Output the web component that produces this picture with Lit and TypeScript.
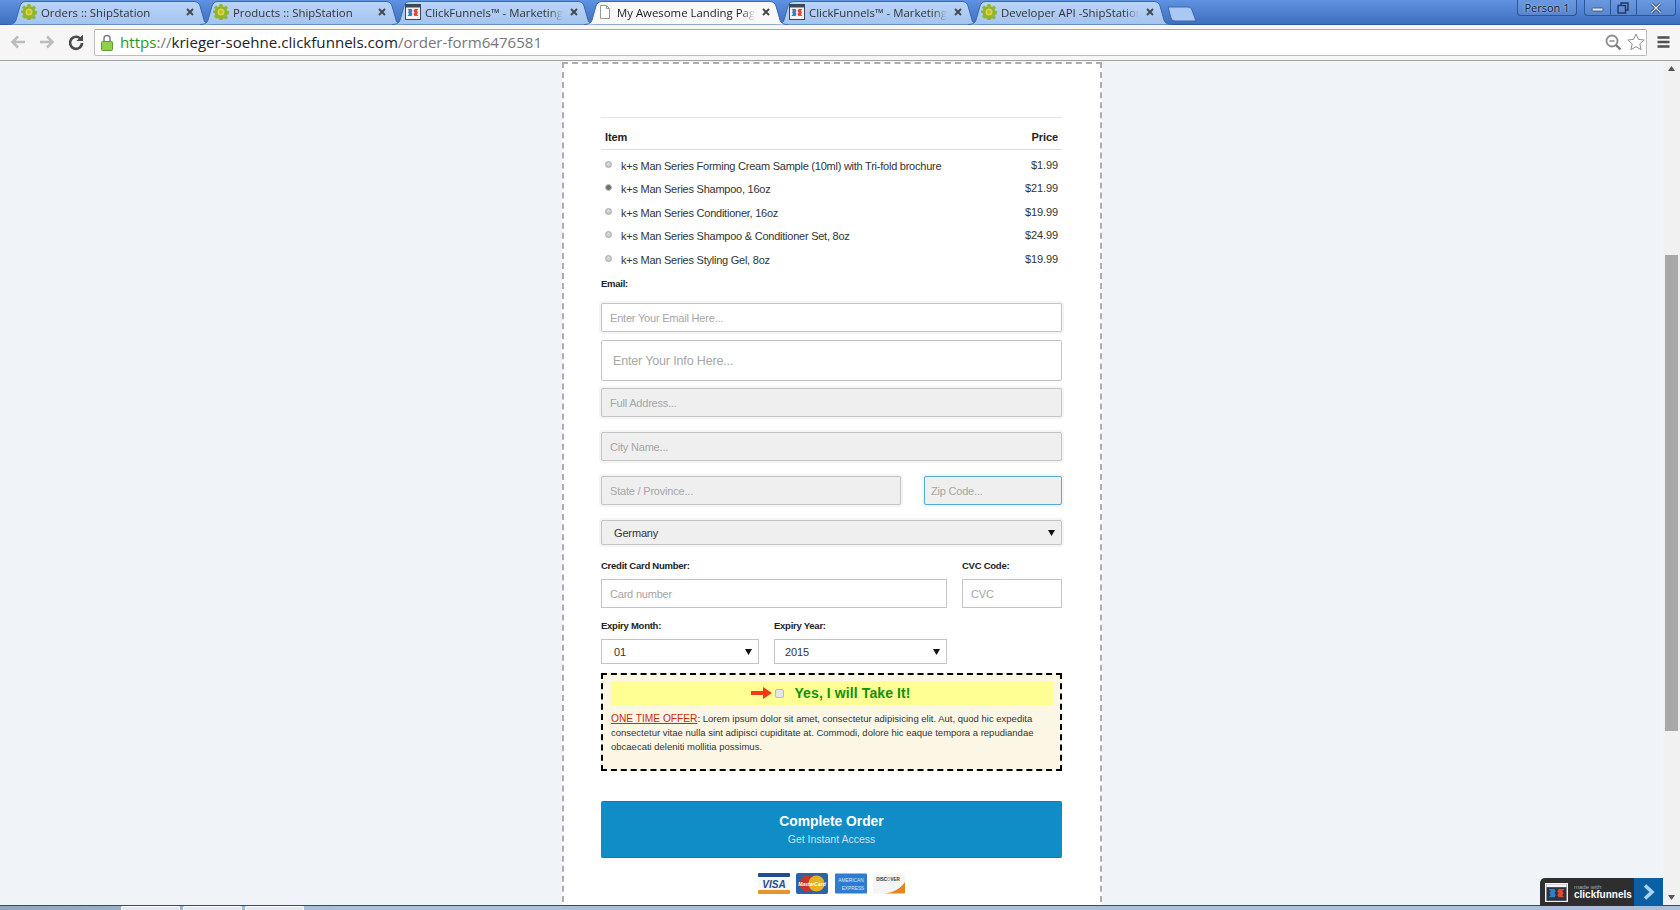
import { LitElement, css, html, svg } from "lit";
import { customElement } from "lit/decorators.js";

const gear = html`<svg class="fav" viewBox="0 0 16 16">
  <path fill="#8fb52c" d="M6.600 0h2.800l.4 2.300 1.300.6L13 1.600l2 2-1.300 1.900.6 1.300 2.300.4v2.800l-2.300.4-.6 1.300 1.300 1.900-2 2-1.900-1.300-1.300.6-.4 2.300H6.600l-.4-2.300-1.300-.6L3 14.400l-2-2 1.300-1.900-.6-1.300L-.6 8.800V6.900l2.300-.4.600-1.300L1 3.600l2-2 1.900 1.300 1.300-.6z"/>
  <circle cx="8" cy="8" r="3.500" fill="#e3d23a"/>
  <circle cx="8" cy="8" r="1.800" fill="#a7c23b"/>
</svg>`;

const funnelMark = (bg: string, frame: string) => svg`
  <rect x=".5" y=".5" width="15" height="15" fill=${bg} stroke=${frame}/>
  <rect x="1" y="1" width="14" height="2.500" fill=${frame}/>
  <path fill="#2f7fc9" d="M2.500 5h4l1 2-1 1.500 1 1.500-1 2h-4l1.500-2-1-1.500 1-1.500z"/>
  <path fill="#e2492f" d="M13.500 5h-4l-1 2 1 1.500-1 1.500 1 2h4L12 10.500l1-2L12 7z"/>`;

const funnel = html`<svg class="fav" viewBox="0 0 16 16">${funnelMark("#f4f4f4", "#3a4a5c")}</svg>`;

const doc = html`<svg class="fav" viewBox="0 0 16 16">
  <path fill="#fff" stroke="#9a9a9a" d="M3.500 1.500h6l3 3v10h-9z"/>
  <path fill="none" stroke="#9a9a9a" d="M9.500 1.500v3h3"/>
</svg>`;

const tabs = [
  { title: "Orders :: ShipStation", icon: gear },
  { title: "Products :: ShipStation", icon: gear },
  { title: "ClickFunnels™ - Marketing Software", icon: funnel },
  { title: "My Awesome Landing Page", icon: doc, active: true },
  { title: "ClickFunnels™ - Marketing Software", icon: funnel },
  { title: "Developer API -ShipStation Help", icon: gear },
];

const products = [
  { name: "k+s Man Series Forming Cream Sample (10ml) with Tri-fold brochure", price: "$1.99" },
  { name: "k+s Man Series Shampoo, 16oz", price: "$21.99", checked: true },
  { name: "k+s Man Series Conditioner, 16oz", price: "$19.99" },
  { name: "k+s Man Series Shampoo & Conditioner Set, 8oz", price: "$24.99" },
  { name: "k+s Man Series Styling Gel, 8oz", price: "$19.99" },
];

@customElement("app-root")
export class AppRoot extends LitElement {
  static styles = css`
    :host {
      display: flex;
      flex-direction: column;
      position: relative;
      width: 1680px;
      height: 910px;
      overflow: hidden;
      font-family: "Liberation Sans", Arial, sans-serif;
      background: #f0f3f8;
    }
    input, button { font-family: inherit; }

    /* browser chrome */
    .tabbar {
      height: 25px;
      flex: none;
      display: flex;
      padding-left: 8px;
      box-sizing: border-box;
      background: linear-gradient(#5f92e0, #3f70c0);
      border-bottom: 1px solid #2f5a9e;
      position: relative;
    }
    .tab {
      width: 192px;
      flex: none;
      height: 24px;
      position: relative;
      display: flex;
      align-items: center;
      padding-left: 13px;
      box-sizing: border-box;
      font-family: "Open Sans", sans-serif;
      font-size: 11.400px;
      color: #333;
    }
    .tab.active { z-index: 1; color: #222; }
    .tab-shape {
      position: absolute;
      left: 0;
      top: 0;
      width: 204px;
      height: 25px;
    }
    .fav { width: 16px; height: 16px; flex: none; position: relative; }
    .tab-title {
      position: relative;
      margin-left: 4px;
      width: 138px;
      white-space: nowrap;
      overflow: hidden;
      -webkit-mask-image: linear-gradient(90deg, #000 90%, transparent);
      mask-image: linear-gradient(90deg, #000 90%, transparent);
    }
    .tab-close {
      position: relative;
      width: 8px;
      height: 8px;
      margin-left: 7px;
      flex: none;
    }
    .newtab { width: 30px; height: 16px; flex: none; margin: 6px 0 0 7px; }
    .win {
      position: absolute;
      right: 4px;
      top: 0;
      display: flex;
      gap: 7px;
    }
    .person, .winbtns {
      height: 16px;
      box-sizing: border-box;
      border: 1px solid #2d5597;
      border-top: 0;
      border-radius: 0 0 4px 4px;
      background: rgba(255, 255, 255, 0.07);
    }
    .person {
      width: 60px;
      text-align: center;
      font: 11px/15px "Open Sans", sans-serif;
      color: #101a28;
      text-shadow: 0 0 2px rgba(255, 255, 255, 0.8);
    }
    .winbtns { display: flex; width: 92px; }
    .winbtns div {
      display: flex;
      align-items: center;
      justify-content: center;
      border-right: 1px solid #2d5597;
      width: 25px;
    }
    .winbtns div:last-child { border: 0; flex: 1; }
    .winbtns svg { width: 14px; height: 12px; }

    .toolbar {
      height: 36px;
      flex: none;
      box-sizing: border-box;
      display: flex;
      align-items: center;
      background: #f6f6f6;
      border-bottom: 1px solid #a3a3a3;
      padding: 0 9px 1px 3px;
    }
    .nav { width: 29px; height: 18px; display: flex; justify-content: center; }
    .nav svg { width: 18px; height: 18px; }
    .omnibox {
      margin-left: 4px;
      flex: 1;
      height: 27px;
      box-sizing: border-box;
      border: 1px solid #bdbdbd;
      border-top-color: #a8a8a8;
      border-radius: 2px;
      background: #fff;
      display: flex;
      align-items: center;
      padding: 0 1px 0 6px;
    }
    .lock { width: 12px; height: 17px; flex: none; }
    .url {
      margin-left: 7px;
      flex: 1;
      font: 15.100px "Open Sans", sans-serif;
      color: #777;
      white-space: nowrap;
    }
    .url b { font-weight: 400; color: #1c9a1c; }
    .url i { font-style: normal; color: #222; }
    .omni-icon { width: 18px; height: 18px; margin-left: 5px; flex: none; }
    .menu { width: 15px; height: 14px; margin-left: 9px; flex: none; }

    /* page */
    .viewport { flex: 1; min-height: 0; display: flex; }
    .page { flex: 1; display: flex; justify-content: center; overflow: hidden; padding-left: 1px; }
    .card {
      width: 540px;
      height: 860px;
      flex: none;
      box-sizing: border-box;
      margin-top: 1px;
      background: #fff;
      border: 2px dashed #adadad;
      border-bottom: 0;
      padding: 53px 38px 0 37px;
    }
    .hr { height: 1px; background: #e6e6e6; }
    .items-head {
      display: flex;
      justify-content: space-between;
      height: 32px;
      padding: 13px 4px 0;
      box-sizing: border-box;
      border-bottom: 1px solid #ddd;
      font-size: 11px;
      line-height: 13px;
      font-weight: bold;
      letter-spacing: -0.100px;
      color: #222;
    }
    .items { padding-top: 2.500px; }
    .item {
      display: flex;
      height: 23.500px;
      align-items: flex-start;
      padding: 0 4px;
      font-size: 11px;
      color: #333;
    }
    .radio {
      appearance: none;
      -webkit-appearance: none;
      width: 7px;
      height: 7px;
      margin: 8px 9px 0 0;
      flex: none;
      border-radius: 50%;
      border: 1px solid #a8a8a8;
      background: radial-gradient(circle at 50% 35%, #ddd, #bdbdbd);
    }
    .radio.on { background: radial-gradient(circle, #6e6e6e 0 2px, #ccc 3px); }
    .item-name { flex: 1; padding-top: 7px; line-height: 13px; white-space: nowrap; letter-spacing: -0.240px; }
    .item-price { padding-top: 6px; line-height: 13px; letter-spacing: -0.100px; }
    .label { font-size: 9.500px; font-weight: bold; color: #222; line-height: 12px; letter-spacing: -0.250px; }
    .label.email { margin-top: 7.500px; }

    .field {
      display: block;
      width: 100%;
      height: 29px;
      box-sizing: border-box;
      border: 1px solid #c4c4c4;
      border-radius: 2px;
      box-shadow: 0 0 0 2px #f4f4f4;
      padding: 0 8px;
      font-size: 11px;
      letter-spacing: -0.200px;
      color: #333;
      outline: none;
      background: #fff;
    }
    .field::placeholder { color: #a6a6a6; opacity: 1; }
    .field.grey { background: #efefef; margin-top: 15px; }
    .field.email { margin-top: 13.500px; }
    .field.info {
      height: 41px;
      margin-top: 8px;
      padding: 0 11px;
      font-size: 12.500px;
      letter-spacing: -0.150px;
      box-shadow: none;
    }
    .field.grey.address { margin-top: 7px; }
    .pair { display: flex; justify-content: space-between; margin-top: 15px; }
    .pair .field.grey { margin-top: 0; }
    .state { width: 300px; }
    .zip { width: 138px; padding: 0 6px; }
    .field.zip { border-color: #55a9df; }
    .dropdown {
      display: flex;
      align-items: center;
      justify-content: space-between;
      height: 25px;
      box-sizing: border-box;
      border: 1px solid #c4c4c4;
      padding: 0 6px 0 12px;
      font-size: 11px;
      letter-spacing: -0.150px;
      color: #333;
      background: #fff;
    }
    .dropdown svg { width: 7px; height: 6px; flex: none; }
    .dropdown.year { padding-left: 10px; }
    .dropdown.country {
      margin-top: 15px;
      background: #efefef;
      border-radius: 2px;
      box-shadow: 0 0 0 2px #f4f4f4;
    }
    .card-row {
      display: grid;
      grid-template-columns: 346px 100px;
      justify-content: space-between;
      margin-top: 15px;
    }
    .card-row .field {
      margin-top: 7px;
      box-shadow: none;
      border-radius: 0;
    }
    .expiry {
      display: grid;
      grid-template-columns: 158px 173px;
      gap: 15px;
      margin-top: 12px;
    }
    .expiry .dropdown { margin-top: 7px; }

    .offer {
      margin-top: 9px;
      height: 98px;
      box-sizing: border-box;
      border: 2px dashed #000;
      background: #fcf7e4;
      padding: 6px 7px 0 8px;
    }
    .offer-head {
      height: 24px;
      background: #ffff93;
      display: flex;
      align-items: center;
      justify-content: center;
      padding-right: 2px;
    }
    .arrow { width: 21px; height: 12px; flex: none; }
    .check {
      appearance: none;
      -webkit-appearance: none;
      width: 9px;
      height: 9px;
      margin: 0 10px 0 3px;
      border: 1px solid #bbb;
      border-radius: 2px;
      background: #e6e6e6;
    }
    .offer-title { font-size: 14px; font-weight: bold; color: #0d930d; letter-spacing: 0.100px; }
    .offer-text {
      margin: 7px 0 0;
      font-size: 9.500px;
      line-height: 14px;
      color: #333;
    }
    .offer-text u { color: #d02a10; font-size: 10.200px; }

    .submit {
      display: block;
      width: 100%;
      height: 57px;
      margin-top: 30px;
      border: 0;
      border-radius: 2px;
      background: #108dc7;
      border-top: 1px solid #0c80b6;
      border-bottom: 1px solid #0c80b6;
      color: #fff;
      text-align: center;
      padding: 0;
    }
    .submit strong { display: block; font-size: 13.800px; line-height: 18px; }
    .submit span { display: block; font-size: 10.500px; line-height: 16px; color: #c2e2f2; }
    .pay { display: flex; justify-content: center; gap: 6.500px; margin-top: 15px; }
    .pay svg { width: 32px; height: 21px; flex: none; }

    .scrollbar {
      width: 17px;
      flex: none;
      background: #f1f1f1;
      position: relative;
    }
    .thumb {
      position: absolute;
      top: 194px;
      left: 2px;
      width: 13px;
      height: 476px;
      background: #a8a8a8;
    }
    .sb-arrow { position: absolute; left: 5px; width: 7px; height: 5px; }

    .taskbar {
      height: 4px;
      flex: none;
      display: flex;
      gap: 3px;
      padding-left: 121px;
      background: linear-gradient(90deg, #8fa6c0, #a8c0dc 20%, #a9c1dc);
      border-top: 1px solid #3d4a59;
    }
    .taskbar div {
      width: 59px;
      box-sizing: border-box;
      background: #dfe8f3;
      border: 1px solid #fff;
      border-bottom: 0;
      border-radius: 2px 2px 0 0;
    }

    /* floating badge */
    .badge {
      position: absolute;
      left: 1540px;
      top: 878px;
      width: 123px;
      height: 28px;
      display: flex;
      background: #2e2e2e;
      border-radius: 5px 0 0 0;
      color: #fff;
    }
    .badge-logo { width: 23px; height: 19px; margin: 5px 6px 0 5px; flex: none; }
    .badge-text { flex: 1; font-size: 10px; font-weight: bold; line-height: 10px; padding-top: 6px; white-space: nowrap; }
    .badge-text small { display: block; font-size: 6px; line-height: 6px; font-weight: 400; color: #aaa; }
    .badge-go { width: 29px; background: #0b5fa5; display: flex; align-items: center; justify-content: center; flex: none; }
    .badge-go svg { width: 13px; height: 16px; }
  `;

  private renderTab(t: { title: string; icon: unknown; active?: boolean }) {
    return html`<div class="tab ${t.active ? "active" : ""}">
      <svg class="tab-shape" viewBox="0 0 204 25">
        <path
          d="M0 24.500C5 24.500 7 23 8 20L12 6C13 3 15 1.500 18 1.500H186C189 1.500 191 3 192 6L196 20C197 23 199 24.500 204 24.500"
          fill=${t.active ? "#f8f8f8" : "url(#tabfill)"}
          stroke="#3c68ad"
        />
      </svg>
      ${t.icon}
      <div class="tab-title">${t.title}</div>
      <svg class="tab-close" viewBox="0 0 8 8">
        <path d="M1 1l6 6M7 1L1 7" stroke="#444" stroke-width="1.800" />
      </svg>
    </div>`;
  }

  private renderChrome() {
    return html`
      <svg width="0" height="0" style="position:absolute">
        <defs>
          <linearGradient id="tabfill" x1="0" x2="0" y1="0" y2="1">
            <stop offset="0" stop-color="#bcd5f6" />
            <stop offset="1" stop-color="#a3c3ef" />
          </linearGradient>
        </defs>
      </svg>
      <div class="tabbar">
        ${tabs.map((t) => this.renderTab(t))}
        <svg class="newtab" viewBox="0 0 30 16">
          <path d="M1 1h20c2 0 3 1 4 3l4 11H8c-2 0-3-1-4-3z" fill="#a9c8f2" stroke="#3c68ad" />
        </svg>
        <div class="win">
          <div class="person">Person 1</div>
          <div class="winbtns">
            <div>
              <svg viewBox="0 0 14 12"><rect x="1" y="6" width="11" height="3" rx="1" fill="#dfe9f7" stroke="#2d4a78" stroke-width=".8" /></svg>
            </div>
            <div>
              <svg viewBox="0 0 14 12">
                <path d="M4 3V1h7v7H9" fill="none" stroke="#24395c" stroke-width="1.400" />
                <rect x="1" y="3.500" width="7.500" height="7.500" fill="none" stroke="#24395c" stroke-width="1.400" />
              </svg>
            </div>
            <div>
              <svg viewBox="0 0 14 12"><path d="M2.500 1.500l9 9M11.500 1.500l-9 9" stroke="#24395c" stroke-width="2.600" /><path d="M2.500 1.500l9 9M11.500 1.500l-9 9" stroke="#e8eef8" stroke-width="1.200" /></svg>
            </div>
          </div>
        </div>
      </div>
      <div class="toolbar">
        <div class="nav">
          <svg viewBox="0 0 18 18"><path d="M16 9H4M9 3.500L3.500 9 9 14.500" fill="none" stroke="#bdbdbd" stroke-width="2.600" /></svg>
        </div>
        <div class="nav">
          <svg viewBox="0 0 18 18"><path d="M2 9h12M9 3.500L14.500 9 9 14.500" fill="none" stroke="#bdbdbd" stroke-width="2.600" /></svg>
        </div>
        <div class="nav">
          <svg viewBox="0 0 18 18">
            <path d="M14 6.500A6 6 0 1 0 15 10" fill="none" stroke="#4a4a4a" stroke-width="2.600" />
            <path d="M16 1.500V8H9.500z" fill="#4a4a4a" />
          </svg>
        </div>
        <div class="omnibox">
          <svg class="lock" viewBox="0 0 12 17">
            <path d="M3 8V4.500a3 3 0 0 1 6 0V8" fill="none" stroke="#7f7f7f" stroke-width="1.500" />
            <rect x=".5" y="7.500" width="11" height="9" rx="1" fill="#8fd14f" stroke="#5f9a2c" />
          </svg>
          <div class="url"><b>https</b>://<i>krieger-soehne.clickfunnels.com</i>/order-form6476581</div>
          <svg class="omni-icon" viewBox="0 0 18 18">
            <circle cx="8" cy="8" r="5.500" fill="none" stroke="#8c8c8c" stroke-width="1.800" />
            <path d="M12 12l4.500 4.500" stroke="#777" stroke-width="2.400" />
            <path d="M5.500 8h5" stroke="#8c8c8c" stroke-width="1.500" />
          </svg>
          <svg class="omni-icon" viewBox="0 0 18 18">
            <path d="M9 1l2.400 5.400 5.800.6-4.400 3.900 1.300 5.800L9 13.700l-5.100 3 1.300-5.800L.8 7l5.800-.6z" fill="#fff" stroke="#8c8c8c" />
          </svg>
        </div>
        <svg class="menu" viewBox="0 0 15 14">
          <path d="M1.500 2.500h12M1.500 7h12M1.500 11.500h12" stroke="#4f4f4f" stroke-width="2.400" />
        </svg>
      </div>
    `;
  }

  private renderPayIcons() {
    return html`
      <svg viewBox="0 0 32 21">
        <rect width="32" height="21" rx="1" fill="#f6f6f6" />
        <rect width="32" height="4" rx="1" fill="#1f4e8c" />
        <rect y="17" width="32" height="4" rx="1" fill="#e5952c" />
        <text x="16" y="14.500" text-anchor="middle" font-family="Liberation Sans" font-size="10" font-weight="bold" font-style="italic" fill="#1f4e8c">VISA</text>
      </svg>
      <svg viewBox="0 0 32 21">
        <rect width="32" height="21" rx="2" fill="#2b63a8" />
        <circle cx="11.500" cy="10.500" r="8" fill="#c9352b" />
        <circle cx="20.500" cy="10.500" r="8" fill="#eab11e" />
        <text x="16" y="12.500" text-anchor="middle" font-family="Liberation Sans" font-size="5" font-weight="bold" font-style="italic" fill="#fff">MasterCard</text>
      </svg>
      <svg viewBox="0 0 32 21">
        <rect width="32" height="20" y=".5" rx="1" fill="#2f7bd0" />
        <text x="16" y="9" text-anchor="middle" font-family="Liberation Sans" font-size="4.800" fill="#dcebfa">AMERICAN</text>
        <text x="18" y="17" text-anchor="middle" font-family="Liberation Sans" font-size="4.800" fill="#dcebfa">EXPRESS</text>
      </svg>
      <svg viewBox="0 0 32 21">
        <rect width="32" height="20" y=".5" rx="1" fill="#f5f5f5" />
        <path d="M32 9V19.500a1 1 0 0 1-1 1H10C20 20 27 16 32 9z" fill="#e5861f" />
        <text x="15" y="8" text-anchor="middle" font-family="Liberation Sans" font-size="4.500" font-weight="bold" fill="#333">DISC<tspan fill="#e5861f">O</tspan>VER</text>
      </svg>
    `;
  }

  render() {
    const arrow = html`<svg viewBox="0 0 7 6"><path d="M0 0h7L3.500 6z" fill="#111" /></svg>`;
    return html`
      ${this.renderChrome()}
      <div class="viewport">
        <div class="page">
          <div class="card">
            <div class="hr"></div>
            <div class="items-head"><span>Item</span><span>Price</span></div>
            <div class="items">
              ${products.map(
                (p) => html`<div class="item">
                  <input class="radio ${p.checked ? "on" : ""}" type="radio" name="product" ?checked=${p.checked} />
                  <span class="item-name">${p.name}</span>
                  <span class="item-price">${p.price}</span>
                </div>`
              )}
            </div>
            <div class="label email">Email:</div>
            <input class="field email" placeholder="Enter Your Email Here..." />
            <input class="field info" placeholder="Enter Your Info Here..." />
            <input class="field grey address" placeholder="Full Address..." />
            <input class="field grey" placeholder="City Name..." />
            <div class="pair">
              <input class="field grey state" placeholder="State / Province..." />
              <input class="field grey zip" placeholder="Zip Code..." />
            </div>
            <div class="dropdown country"><span>Germany</span>${arrow}</div>
            <div class="card-row">
              <div>
                <div class="label">Credit Card Number:</div>
                <input class="field" placeholder="Card number" />
              </div>
              <div>
                <div class="label">CVC Code:</div>
                <input class="field" placeholder="CVC" />
              </div>
            </div>
            <div class="expiry">
              <div>
                <div class="label">Expiry Month:</div>
                <div class="dropdown"><span>01</span>${arrow}</div>
              </div>
              <div>
                <div class="label">Expiry Year:</div>
                <div class="dropdown year"><span>2015</span>${arrow}</div>
              </div>
            </div>
            <div class="offer">
              <div class="offer-head">
                <svg class="arrow" viewBox="0 0 21 12"><path d="M0 4h12V0l9 6-9 6V8H0z" fill="#f33a16" /></svg>
                <input class="check" type="checkbox" />
                <span class="offer-title">Yes, I will Take It!</span>
              </div>
              <p class="offer-text">
                <u>ONE TIME OFFER</u>: Lorem ipsum dolor sit amet, consectetur adipisicing elit. Aut, quod hic expedita
                consectetur vitae nulla sint adipisci cupiditate at. Commodi, dolore hic eaque tempora a repudiandae
                obcaecati deleniti mollitia possimus.
              </p>
            </div>
            <button class="submit"><strong>Complete Order</strong><span>Get Instant Access</span></button>
            <div class="pay">${this.renderPayIcons()}</div>
          </div>
        </div>
        <div class="scrollbar">
          <svg class="sb-arrow" style="top:5px" viewBox="0 0 7 5"><path d="M3.500 0L7 5H0z" fill="#555" /></svg>
          <div class="thumb"></div>
          <svg class="sb-arrow" style="bottom:5px" viewBox="0 0 7 5"><path d="M0 0h7L3.500 5z" fill="#555" /></svg>
        </div>
      </div>
      <div class="taskbar"><div></div><div></div><div></div></div>
      <div class="badge">
        <svg class="badge-logo" viewBox="0 0 16 16" preserveAspectRatio="none">${funnelMark("#2b3440", "#f2f2f2")}</svg>
        <div class="badge-text"><small>made with</small>clickfunnels</div>
        <div class="badge-go">
          <svg viewBox="0 0 13 16"><path d="M3 1.500L10 8l-7 6.500" fill="none" stroke="#a9d4f2" stroke-width="3.600" /></svg>
        </div>
      </div>
    `;
  }
}
